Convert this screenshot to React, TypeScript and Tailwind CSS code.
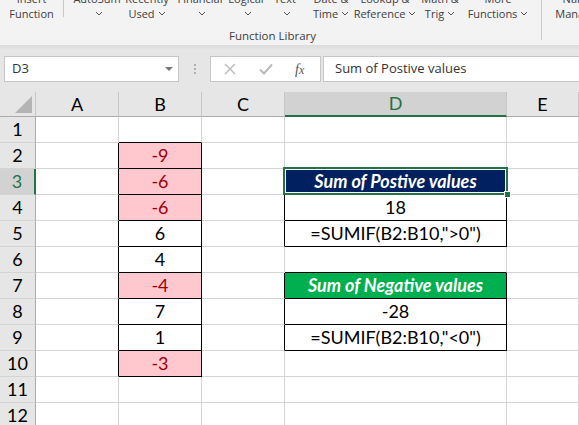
import React from "react";

const Chev = () => (
  <svg width="8" height="5" viewBox="0 0 8 5" className="inline-block ml-[3px] mb-[1px]">
    <polyline points="1,1 4,4 7,1" fill="none" stroke="#555" strokeWidth="1" />
  </svg>
);

type Item = { w: string; l1: string; l2: string; chev: boolean };

const items: Item[] = [
  { w: "w-[66px]", l1: "AutoSum", l2: "", chev: true },
  { w: "w-[34px]", l1: "Recently", l2: "Used", chev: true },
  { w: "w-[72px]", l1: "Financial", l2: "", chev: true },
  { w: "w-[20px]", l1: "Logical", l2: "", chev: true },
  { w: "w-[58px]", l1: "Text", l2: "", chev: true },
  { w: "w-[34px]", l1: "Date &", l2: "Time", chev: true },
  { w: "w-[74px]", l1: "Lookup &", l2: "Reference", chev: true },
  { w: "w-[36px]", l1: "Math &", l2: "Trig", chev: true },
  { w: "w-[80px]", l1: "More", l2: "Functions", chev: true },
];

const RibbonItem = ({ w, l1, l2, chev }: Item) => (
  <div className={`${w} shrink-0 flex flex-col items-center`}>
    <div className="whitespace-nowrap leading-[15px]">{l1}</div>
    <div className="whitespace-nowrap leading-[15px] h-[15px] flex items-center justify-center">
      {l2}
      {chev && <Chev />}
    </div>
  </div>
);

const isBordered = (r: number, c: number) =>
  (c === 2 && r >= 2 && r <= 10) || (c === 4 && ((r >= 3 && r <= 5) || (r >= 7 && r <= 9)));

const values: Record<string, { t: string; neg?: boolean }> = {
  "2-2": { t: "-9", neg: true },
  "3-2": { t: "-6", neg: true },
  "4-2": { t: "-6", neg: true },
  "5-2": { t: "6" },
  "6-2": { t: "4" },
  "7-2": { t: "-4", neg: true },
  "8-2": { t: "7" },
  "9-2": { t: "1" },
  "10-2": { t: "-3", neg: true },
  "4-4": { t: "18" },
  "5-4": { t: '=SUMIF(B2:B10,">0")' },
  "8-4": { t: "-28" },
  "9-4": { t: '=SUMIF(B2:B10,"<0")' },
};

const cellFont = { fontFamily: "Lato, 'Noto Sans', sans-serif" };

function Cell({ r, c }: { r: number; c: number }) {
  const br = isBordered(r, c) || isBordered(r, c + 1);
  const bb = isBordered(r, c) || isBordered(r + 1, c);
  const v = values[`${r}-${c}`];
  const neg = v?.neg;
  const isD3 = r === 3 && c === 4;
  const isD7 = r === 7 && c === 4;
  return (
    <div
      className={`relative flex items-center justify-center border-r border-b text-[18px] ${
        br ? "border-r-black" : "border-r-[#d4d4d4]"
      } ${bb ? "border-b-black" : "border-b-[#d4d4d4]"} ${
        neg ? "bg-[#ffc7ce] text-[#9c0006]" : "text-black"
      } ${isD7 ? "bg-[#00b050]" : ""}`}
    >
      {v && <span className="whitespace-nowrap">{v.t}</span>}
      {isD7 && (
        <span className="whitespace-nowrap text-white font-bold italic">Sum of Negative values</span>
      )}
      {isD3 && (
        <div className="absolute left-[-2px] top-[-2px] right-[-2px] bottom-[-1px] border-2 border-[#217346] z-10">
          <div className="w-full h-full border border-white bg-[#002060] flex items-center justify-center">
            <span className="whitespace-nowrap text-white font-bold italic">Sum of Postive values</span>
          </div>
          <div className="absolute right-[-5px] bottom-[-5px] w-[7px] h-[7px] bg-[#217346] border border-white" />
        </div>
      )}
    </div>
  );
}

export default function App() {
  const cols = ["A", "B", "C", "D", "E"];
  const rows = Array.from({ length: 12 }, (_, i) => i + 1);
  return (
    <div className="w-[579px] h-[425px] overflow-hidden bg-[#e6e6e6] flex flex-col">
      {/* Ribbon */}
      <div
        className="h-[45px] shrink-0 bg-[#f3f3f3] overflow-hidden text-[11px] text-[#404040]"
        style={{ fontFamily: "'Open Sans', 'Noto Sans', sans-serif" }}
      >
        <div className="flex -mt-[9px] items-start">
          <div className="w-[63px] shrink-0 flex flex-col items-center">
            <div className="leading-[15px] whitespace-nowrap">Insert</div>
            <div className="leading-[15px] whitespace-nowrap">Function</div>
          </div>
          <div className="w-px h-[26px] bg-[#c8c8c8] shrink-0" />
          {items.map((it) => (
            <RibbonItem key={it.l1} {...it} />
          ))}
          <div className="w-[3px] shrink-0" />
          <div className="w-px h-[49px] bg-[#c8c8c8] shrink-0" />
          <div className="w-[72px] shrink-0 flex flex-col items-center">
            <div className="leading-[15px] whitespace-nowrap">Name</div>
            <div className="leading-[15px] whitespace-nowrap">Manager</div>
          </div>
        </div>
        <div className="ml-[229px] -mt-[12px] leading-[16px] whitespace-nowrap text-[11.5px]">Function Library</div>
      </div>
      <div className="h-[5px] shrink-0 bg-gradient-to-b from-[#dcdcdc] to-[#e6e6e6]" />

      {/* Formula bar */}
      <div className="h-[42px] shrink-0 flex items-start pt-[6px] pl-[4px]" style={{ fontFamily: "'Open Sans', 'Noto Sans', sans-serif" }}>
        <div className="w-[175px] h-[26px] bg-white border border-[#c6c6c6] flex items-center pl-[7px] pr-[5px] text-[13px] text-[#333]">
          <span className="flex-1">D3</span>
          <svg width="8" height="4" viewBox="0 0 8 4">
            <polygon points="0,0 8,0 4,4" fill="#777" />
          </svg>
        </div>
        <div className="w-[31px] h-[26px] flex flex-col items-center justify-center gap-[2px]">
          <div className="w-[2px] h-[2px] bg-[#b0b0b0]" />
          <div className="w-[2px] h-[2px] bg-[#b0b0b0]" />
          <div className="w-[2px] h-[2px] bg-[#b0b0b0]" />
        </div>
        <div className="w-[111px] h-[26px] bg-white border border-[#c6c6c6] flex items-center">
          <svg width="12" height="12" viewBox="0 0 12 12" className="ml-[13px]">
            <path d="M1 1 L11 11 M11 1 L1 11" stroke="#b9b9b9" strokeWidth="1.4" />
          </svg>
          <svg width="14" height="12" viewBox="0 0 14 12" className="ml-[23px]">
            <path d="M1 6.5 L5 10.5 L13 1.5" fill="none" stroke="#b9b9b9" strokeWidth="2" />
          </svg>
          <span
            className="ml-[22px] italic text-[14px] text-[#555]"
            style={{ fontFamily: "'Liberation Serif', serif" }}
          >
            f<span className="text-[12px]">x</span>
          </span>
        </div>
        <div className="ml-[2px] flex-1 h-[26px] bg-white border border-[#c6c6c6] border-r-0 flex items-center pl-[11px] text-[13px] text-[#333]">
          Sum of Postive values
        </div>
      </div>

      {/* Grid */}
      <div
        className="grid grid-cols-[36px_83px_83px_83px_222px_1fr] grid-rows-[25px_repeat(12,26px)] bg-white"
        style={cellFont}
      >
        <div className="bg-[#e6e6e6] border-r border-b border-r-[#c6c6c6] border-b-[#ababab] flex items-end justify-end pr-[3px] pb-[3px]">
          <svg width="17" height="17" viewBox="0 0 17 17">
            <polygon points="17,0 17,17 0,17" fill="#b4b4b4" />
          </svg>
        </div>
        {cols.map((c) => (
          <div
            key={c}
            className={`flex items-center justify-center text-[18px] border-r border-r-[#c6c6c6] ${
              c === "D"
                ? "bg-[#d2d2d2] text-[#217346] border-b-2 border-b-[#217346]"
                : "bg-[#e6e6e6] text-black border-b border-b-[#ababab]"
            }`}
          >
            {c}
          </div>
        ))}
        {rows.map((r) => (
          <React.Fragment key={r}>
            <div
              className={`flex items-center justify-center text-[18px] border-b border-b-[#d4d4d4] ${
                r === 3
                  ? "bg-[#d2d2d2] text-[#217346] border-r-2 border-r-[#217346]"
                  : "bg-[#e6e6e6] text-black border-r border-r-[#ababab]"
              }`}
            >
              {r}
            </div>
            {[1, 2, 3, 4, 5].map((c) => (
              <Cell key={c} r={r} c={c} />
            ))}
          </React.Fragment>
        ))}
      </div>
    </div>
  );
}
